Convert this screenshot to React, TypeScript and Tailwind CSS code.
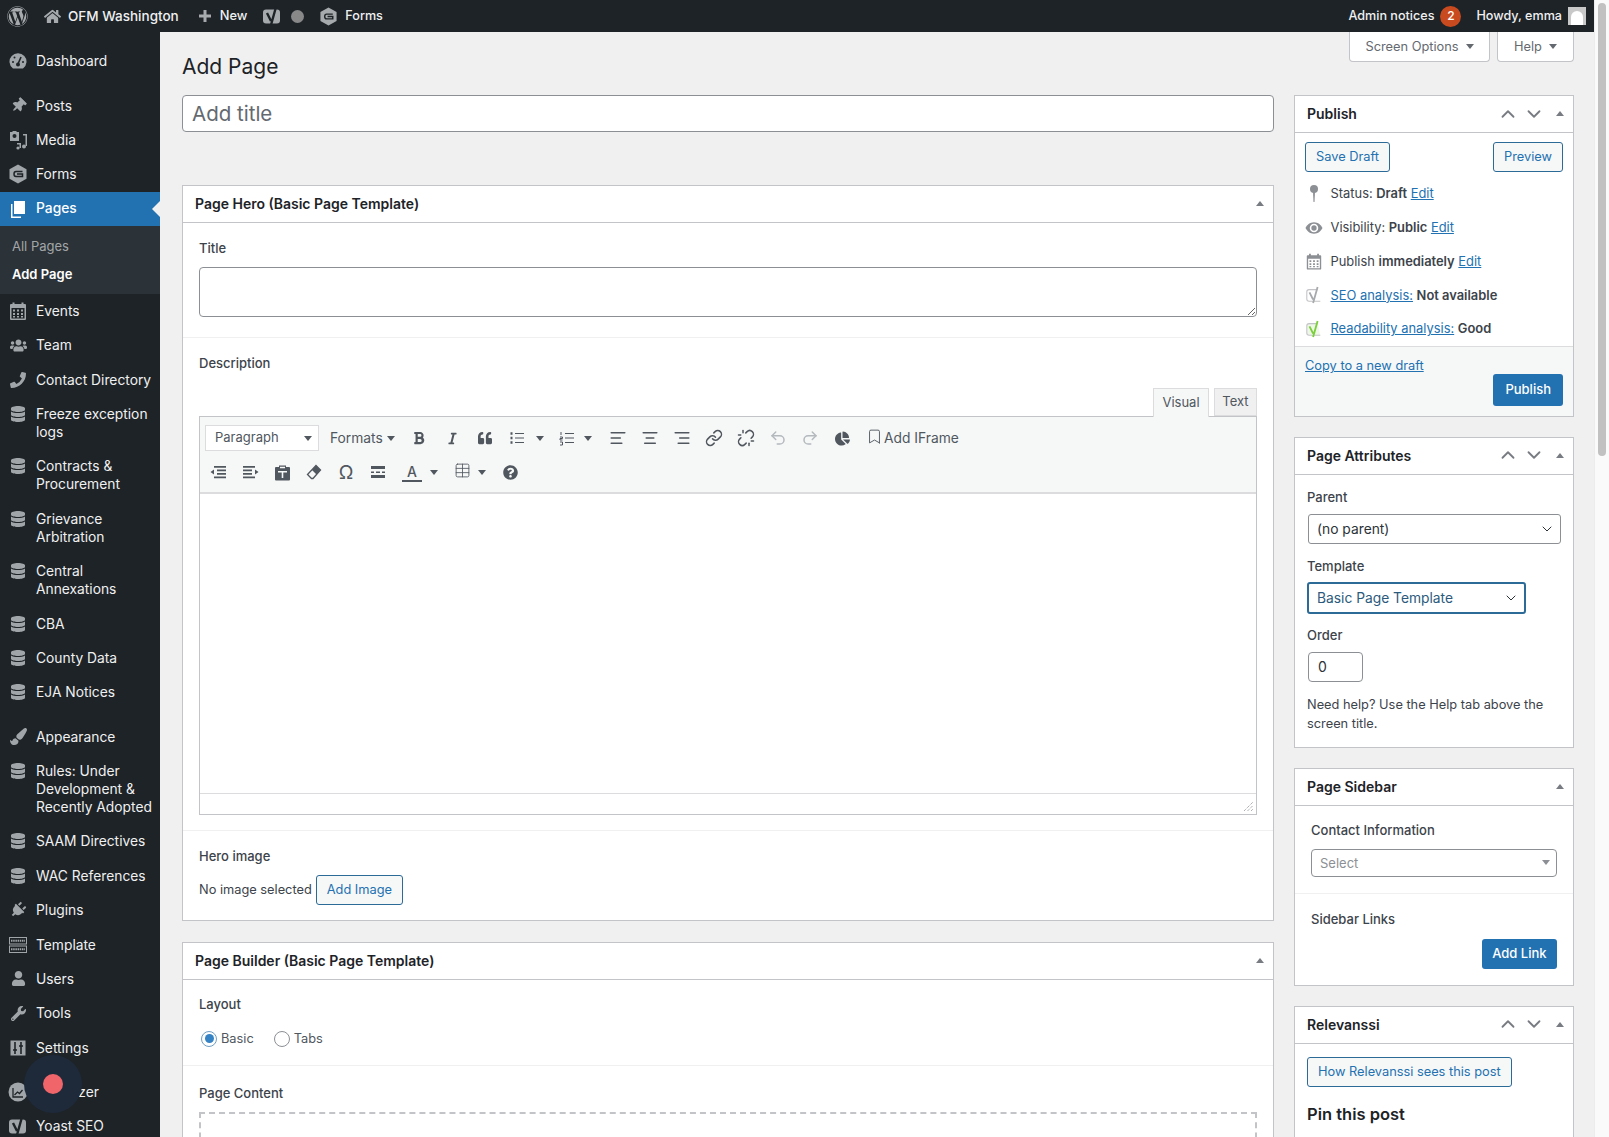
import type { ReactNode } from 'react';
import { ChevronDown, ChevronUp, AlignLeft, AlignCenter, AlignRight, Link, Unlink, Undo2, Redo2, Bookmark, Table } from 'lucide-react';
import { FaWordpress, FaHome, FaDatabase, FaPhoneAlt, FaPaintBrush, FaPlug, FaUser, FaWrench, FaUsers, FaThumbtack, FaBold, FaItalic, FaQuoteLeft, FaChartPie, FaQuestionCircle } from 'react-icons/fa';

function FormsIcon({ size = 20 }: { size?: number }) {
  return (
    <svg width={size} height={size} viewBox="0 0 20 20" fill="currentColor">
      <path d="M10 .500l8.500 4.700v9.600L10 19.500l-8.500-4.700V5.200z" />
      <path d="M14.500 7.500H8Q6 7.500 6 10t2 2.500h6.500V10H9" fill="none" stroke="#1d2327" strokeWidth="1.500" />
    </svg>
  );
}

function YoastIcon({ size = 20, bg = 'currentColor', fg = '#1d2327' }: { size?: number; bg?: string; fg?: string }) {
  return (
    <svg width={size} height={size} viewBox="0 0 20 20">
      <rect x="1" y="3.500" width="17" height="14" rx="3" fill={bg} />
      <path d="M5 7l4 8M14 1l-5 18" fill="none" stroke={fg} strokeWidth="2.400" />
    </svg>
  );
}

function YoastOutline({ color, fill = 'none' }: { color: string; fill?: string }) {
  return (
    <svg width="20" height="20" viewBox="0 0 20 20">
      <path d="M14 4H4.500A2.500 2.500 0 0 0 2 6.500v8A2.500 2.500 0 0 0 4.500 17H17" fill={fill} stroke="#c3c4c7" strokeWidth="1.200" />
      <path d="M5 7l4 8M14 1l-5 18" fill="none" stroke={color} strokeWidth="2" />
    </svg>
  );
}

function MediaIcon() {
  return (
    <svg width="20" height="20" viewBox="0 0 20 20" fill="currentColor">
      <path d="M2 2h2l1-1h3l1 1h2v9H2z" />
      <circle cx="6.500" cy="6" r="2" fill="#1d2327" />
      <path d="M15 4h4v12h-1.500V5.500H15z" />
      <circle cx="16" cy="16.500" r="2" />
      <path d="M9 13h4v5h-1.500v-3.500H9z" />
      <circle cx="10" cy="18" r="1.600" />
    </svg>
  );
}

function DashIcon() {
  return (
    <svg width="20" height="20" viewBox="0 0 20 20">
      <path d="M5 17.500a8.500 8.500 0 1 1 10 0z" fill="currentColor" />
      <path d="M10 13l3-7" stroke="#1d2327" strokeWidth="1.600" />
      <circle cx="10" cy="13.500" r="2" fill="#1d2327" />
      <circle cx="5" cy="11" r="1" fill="#1d2327" />
      <circle cx="6.500" cy="6.500" r="1" fill="#1d2327" />
      <circle cx="15" cy="11" r="1" fill="#1d2327" />
    </svg>
  );
}

function PagesIcon() {
  return (
    <svg width="20" height="20" viewBox="0 0 20 20" fill="#fff">
      <path d="M6 2h11v13H6z" />
      <path d="M3 5h1.500v12.500H13V19H3z" />
    </svg>
  );
}

function CalendarIcon({ size = 20 }: { size?: number }) {
  return (
    <svg width={size} height={size} viewBox="0 0 20 20" fill="currentColor">
      <path d="M3 3h1.500V1.500h2V3h7V1.500h2V3H17a1 1 0 0 1 1 1v14a1 1 0 0 1-1 1H3a1 1 0 0 1-1-1V4a1 1 0 0 1 1-1zm.500 4v10.500h13V7z" />
      <path d="M5 8.500h2v2H5zM9 8.500h2v2H9zM13 8.500h2v2h-2zM5 12h2v2H5zM9 12h2v2H9zM13 12h2v2h-2zM5 15h2v1.500H5zM9 15h2v1.500H9zM13 15h2v1.500h-2z" />
    </svg>
  );
}

function TemplateIcon() {
  return (
    <svg width="20" height="20" viewBox="0 0 20 20" fill="none" stroke="currentColor">
      <rect x="1.500" y="2.500" width="17" height="6.500" strokeWidth="1" />
      <rect x="1.500" y="11" width="17" height="6.500" strokeWidth="1" />
      <path d="M3 5.700h14M3 14.200h14" strokeWidth="2" strokeDasharray="1.500 .7" />
    </svg>
  );
}

function SettingsIcon() {
  return (
    <svg width="20" height="20" viewBox="0 0 20 20">
      <rect x="2.500" y="2.500" width="15" height="15" fill="currentColor" />
      <path d="M7 4v12M13 4v12M5 12h4M11 8h4" stroke="#1d2327" strokeWidth="1.600" />
    </svg>
  );
}

function AnalyzerIcon() {
  return (
    <svg width="20" height="20" viewBox="0 0 20 20">
      <circle cx="10" cy="10" r="9.500" fill="currentColor" />
      <path d="M5 6v9h10M6.500 13l3-3 2 1.500 3-3.500" fill="none" stroke="#1d2327" strokeWidth="1.300" />
    </svg>
  );
}

function IndentIcon({ out = false }: { out?: boolean }) {
  return (
    <svg width="17" height="17" viewBox="0 0 17 17" fill="#50575e" className={out ? '' : '-scale-x-100'}>
      <path d="M4 2h12v1.700H4zM7 5.500h9v1.700H7zM7 9h9v1.700H7zM4 12.500h12v1.700H4zM4 5.500v5l-3.500-2.500z" />
    </svg>
  );
}

const dbIcon = <FaDatabase size={16} />;

type MenuEntry = { icon: ReactNode; label: string; gap?: boolean };

const menuTop: MenuEntry[] = [
  { icon: <FaThumbtack size={15} className="rotate-45" />, label: 'Posts', gap: true },
  { icon: <MediaIcon />, label: 'Media' },
  { icon: <FormsIcon />, label: 'Forms' },
];

const menuRest: MenuEntry[] = [
  { icon: <CalendarIcon />, label: 'Events' },
  { icon: <FaUsers size={17} />, label: 'Team' },
  { icon: <FaPhoneAlt size={16} className="-scale-x-100" />, label: 'Contact Directory' },
  { icon: dbIcon, label: 'Freeze exception logs' },
  { icon: dbIcon, label: 'Contracts & Procurement' },
  { icon: dbIcon, label: 'Grievance Arbitration' },
  { icon: dbIcon, label: 'Central Annexations' },
  { icon: dbIcon, label: 'CBA' },
  { icon: dbIcon, label: 'County Data' },
  { icon: dbIcon, label: 'EJA Notices' },
  { icon: <FaPaintBrush size={17} />, label: 'Appearance', gap: true },
  { icon: dbIcon, label: 'Rules: Under Development & Recently Adopted' },
  { icon: dbIcon, label: 'SAAM Directives' },
  { icon: dbIcon, label: 'WAC References' },
  { icon: <FaPlug size={16} className="rotate-45" />, label: 'Plugins' },
  { icon: <TemplateIcon />, label: 'Template' },
  { icon: <FaUser size={15} />, label: 'Users' },
  { icon: <FaWrench size={15} />, label: 'Tools' },
  { icon: <SettingsIcon />, label: 'Settings' },
  { icon: <AnalyzerIcon />, label: 'Optimizer', gap: true },
  { icon: <YoastIcon />, label: 'Yoast SEO' },
];

function MenuItem({ icon, label, gap }: MenuEntry) {
  return (
    <div className={`flex text-[13.800px] leading-[18px] py-[8.200px] text-[#f0f0f1] ${gap ? 'mt-[10px]' : ''}`}>
      <div className="w-[36px] h-[18px] shrink-0 flex items-center justify-center text-[#a0a5aa]">{icon}</div>
      <div className="pr-1">{label}</div>
    </div>
  );
}

function Sidebar() {
  return (
    <div className="w-[160px] shrink-0 bg-[#1d2327] pt-[12px] overflow-hidden">
      <MenuItem icon={<DashIcon />} label="Dashboard" />
      {menuTop.map((m) => (
        <MenuItem key={m.label} {...m} />
      ))}
      <div className="relative flex items-center h-[34.300px] bg-[#2271b1] text-[13.800px] text-white font-medium">
        <div className="w-[36px] flex justify-center">
          <PagesIcon />
        </div>
        Pages
        <div className="absolute right-0 top-[9px] w-0 h-0 border-y-[8px] border-y-transparent border-r-[8px] border-r-[#f0f0f1]" />
      </div>
      <div className="bg-[#2c3338] pt-[6px] h-[68px] text-[13px] leading-[28px] pl-[12px]">
        <div className="text-[#c3c4c7]/80">All Pages</div>
        <div className="text-white font-semibold">Add Page</div>
      </div>
      {menuRest.map((m) => (
        <MenuItem key={m.label} {...m} />
      ))}
    </div>
  );
}

function TopBar() {
  return (
    <div className="h-[32px] bg-[#1d2327] text-[#f0f0f1] text-[12.600px] font-medium flex items-center shrink-0">
      <div className="w-[34px] flex justify-center text-[#a7aaad]">
        <FaWordpress size={21} />
      </div>
      <div className="ml-[10px] text-[#a7aaad]">
        <FaHome size={17} />
      </div>
      <span className="ml-[7px] text-[13.500px]">OFM Washington</span>
      <svg className="ml-[18px] text-[#a7aaad]" width="16" height="16" viewBox="0 0 16 16" fill="currentColor">
        <path d="M6.500 2h3v4.500H14v3H9.500V14h-3V9.500H2v-3h4.500z" />
      </svg>
      <span className="ml-[7px] text-[12.800px]">New</span>
      <div className="ml-[15px] text-[#a7aaad]">
        <YoastIcon size={20} />
      </div>
      <div className="ml-[9px] w-[13px] h-[13px] rounded-full bg-[#888]" />
      <div className="ml-[15px] text-[#a7aaad]">
        <FormsIcon size={19} />
      </div>
      <span className="ml-[7px]">Forms</span>
      <div className="ml-auto flex items-center">
        <span>Admin notices</span>
        <span className="ml-[6px] w-[21px] h-[21px] rounded-full bg-[#ca4a1f] text-[12px] text-white flex items-center justify-center">2</span>
        <span className="ml-[15px]">Howdy, emma</span>
        <div className="ml-[6px] mr-[8px] w-[18px] h-[18px] bg-[#c8c8c8] flex items-end justify-center overflow-hidden">
          <div className="w-[12px] h-[14px] bg-white rounded-t-full" />
        </div>
      </div>
    </div>
  );
}

function Caret({ up = false }: { up?: boolean }) {
  return (
    <svg width="8" height="5" viewBox="0 0 8 5" fill="currentColor" className="shrink-0">
      <path d={up ? 'M4 0l4 5H0z' : 'M0 0h8L4 5z'} />
    </svg>
  );
}

function OutlineBtn({ children, className = '' }: { children: ReactNode; className?: string }) {
  return (
    <div className={`h-[30px] px-[10px] flex items-center border border-[#2c6a97] rounded-[3px] bg-[#f6f7f7] text-[#2271b1] text-[12.800px] ${className}`}>
      {children}
    </div>
  );
}

function BlueBtn({ children, h = 'h-[32px]', px = 'px-[12px]' }: { children: ReactNode; h?: string; px?: string }) {
  return <div className={`${h} ${px} flex items-center rounded-[3px] bg-[#2271b1] text-white text-[13px] font-medium`}>{children}</div>;
}

function BoxHead({ title, arrows = false }: { title: string; arrows?: boolean }) {
  return (
    <div className="h-[35px] box-content border-b border-[#c3c4c7] flex items-center pl-[12px] pb-px text-[14px] font-semibold text-[#1d2327]">
      {title}
      <div className="ml-auto flex items-center text-[#787c82]">
        {arrows && (
          <>
            <ChevronUp size={22} strokeWidth={2} className="mr-[4px]" />
            <ChevronDown size={22} strokeWidth={2} className="mr-[2px]" />
          </>
        )}
        <div className="w-[26px] flex justify-center">
          <Caret up />
        </div>
      </div>
    </div>
  );
}

function Box({ title, arrows, children, className = '' }: { title: string; arrows?: boolean; children: ReactNode; className?: string }) {
  return (
    <div className={`bg-white border border-[#c3c4c7] ${className}`}>
      <BoxHead title={title} arrows={arrows} />
      {children}
    </div>
  );
}

function Tool({ children, w = 'w-[32px]' }: { children: ReactNode; w?: string }) {
  return <div className={`${w} h-[30px] shrink-0 flex items-center text-[#50575e] ${w === 'w-[32px]' ? 'justify-center' : 'pl-[8px]'}`}>{children}</div>;
}

function ListIcon({ numbered = false }: { numbered?: boolean }) {
  return (
    <svg width="16" height="16" viewBox="0 0 16 16" fill="none" stroke="#50575e">
      <path d="M6 3.500h9M6 8h9M6 12.500h9" strokeWidth="1" />
      {numbered ? (
        <path d="M2 2v3M1 7h2.500v1.500H1V10h2.500M1 12h2.500v3H1" strokeWidth="1" />
      ) : (
        <path d="M1.500 3.500h2M1.500 8h2M1.500 12.500h2" strokeWidth="2.400" />
      )}
    </svg>
  );
}

function EditorToolbar() {
  return (
    <div className="bg-[#f6f7f7] border-b-2 border-[#dcdcde] h-[77px] pt-[6px]">
      <div className="flex items-center h-[30px] pl-[5px]">
        <div className="w-[114px] h-[26px] bg-white border border-[#dcdcde] flex items-center justify-between pl-[9px] pr-[6px] text-[13px] text-[#50575e]">
          Paragraph <Caret />
        </div>
        <div className="w-[86px] pl-[11px] text-[13.800px] text-[#50575e] flex items-center gap-[4px]">
          Formats <Caret />
        </div>
        <div className="-ml-[2px] flex items-center">
          <Tool><FaBold size={14} /></Tool>
        </div>
        <div className="ml-[1px] flex items-center">
          <Tool><FaItalic size={13} /></Tool>
        </div>
        <div className="ml-[1px] flex items-center">
          <Tool><FaQuoteLeft size={14} /></Tool>
        </div>
        <Tool w="w-[52px]"><ListIcon /><span className="ml-[11px]"><Caret /></span></Tool>
        <div className="-ml-[2px] flex items-center">
          <Tool w="w-[51px]"><ListIcon numbered /><span className="ml-[9px]"><Caret /></span></Tool>
        </div>
        <Tool><AlignLeft size={18} strokeWidth={2.200} /></Tool>
        <Tool><AlignCenter size={18} strokeWidth={2.200} /></Tool>
        <Tool><AlignRight size={18} strokeWidth={2.200} /></Tool>
        <Tool><Link size={18} strokeWidth={2} /></Tool>
        <Tool><Unlink size={18} strokeWidth={2} /></Tool>
        <Tool><Undo2 size={18} className="text-[#b4b9be]" /></Tool>
        <Tool><Redo2 size={18} className="text-[#b4b9be]" /></Tool>
        <Tool><FaChartPie size={15} /></Tool>
        <div className="ml-[8px] flex items-center text-[13.800px] text-[#50575e]">
          <Bookmark size={17} strokeWidth={1.300} className="-translate-y-[2px]" />
          <span className="ml-[1px]">Add IFrame</span>
        </div>
      </div>
      <div className="flex items-center h-[30px] mt-[4px] pl-[2px]">
        <Tool><IndentIcon out /></Tool>
        <Tool><IndentIcon /></Tool>
        <Tool>
          <svg width="17" height="17" viewBox="0 0 17 17" fill="#50575e">
            <path d="M2 3h3V1.500h7V3h3a1 1 0 0 1 1 1v11.500a1 1 0 0 1-1 1H2a1 1 0 0 1-1-1V4a1 1 0 0 1 1-1z" />
            <path d="M4 7h9v1.500H9.300V14H7.700V8.500H4zM6 2.800h5v1.500H6z" fill="#f6f7f7" />
          </svg>
        </Tool>
        <Tool>
          <svg width="16" height="16" viewBox="0 0 16 16">
            <path d="M10 1.500l4.500 4.500-7.500 8.500H5.500L1.500 10.500z" fill="none" stroke="#50575e" strokeWidth="1.300" />
            <path d="M10 1.500l4.500 4.500-4 4.500L6 6z" fill="#50575e" />
          </svg>
        </Tool>
        <Tool><span className="text-[19px] leading-none">Ω</span></Tool>
        <Tool>
          <svg width="16" height="14" viewBox="0 0 16 14" fill="#50575e">
            <path d="M1 1h14v3H1zM1 10h14v3H1zM1 6.500h3V8H1zM6 6.500h4V8H6zM12 6.500h3V8h-3z" />
          </svg>
        </Tool>
        <Tool w="w-[54px]">
          <span className="w-[20px] text-center text-[14px] leading-[17px] border-b-[2px] border-[#50575e] font-medium">A</span>
          <span className="ml-[8px]"><Caret /></span>
        </Tool>
        <div className="-ml-[2px] flex items-center">
          <Tool w="w-[48px]">
            <Table size={17} strokeWidth={1.200} className="-translate-y-[2px]" />
            <span className="ml-[7px]"><Caret /></span>
          </Tool>
        </div>
        <Tool><FaQuestionCircle size={15} /></Tool>
      </div>
    </div>
  );
}

function Label({ children, className = '' }: { children: ReactNode; className?: string }) {
  return <div className={`text-[13px] leading-[18px] font-medium text-[#3c434a] ${className}`}>{children}</div>;
}

function MainColumn() {
  return (
    <div className="flex-1 min-w-0">
      <input placeholder="Add title" className="block w-full h-[37px] border border-[#8c8f94] rounded-[4px] bg-white px-[9px] text-[20.500px] placeholder:text-[#646970] outline-none" />
      <Box title="Page Hero (Basic Page Template)" className="mt-[53px]">
        <div className="px-[16px] pt-[16px] pb-[20px] border-b border-[#f0f0f1]">
          <Label>Title</Label>
          <textarea className="block mt-[10px] w-full h-[50px] border border-[#8c8f94] rounded-[4px] bg-white outline-none" />
        </div>
        <div className="px-[16px] pt-[16px] pb-[15px] border-b border-[#f0f0f1]">
          <Label>Description</Label>
          <div className="flex justify-end gap-[5px] mt-[16px] h-[29px] text-[13px] text-[#50575e] relative z-10">
            <div className="w-[56px] h-[29px] bg-[#f6f7f7] border border-[#dcdcde] border-b-0 flex items-center justify-center">Visual</div>
            <div className="w-[43px] h-[28px] bg-[#f0f0f1] border border-[#dcdcde] flex items-center justify-center">Text</div>
          </div>
          <div className="border border-[#c3c4c7] -mt-px">
            <EditorToolbar />
            <div className="h-[300px] bg-white border-b border-[#dcdcde]" />
            <div className="h-[20px] flex justify-end items-end pr-[2px] pb-[2px]">
              <svg width="11" height="11" viewBox="0 0 11 11" stroke="#8c8f94">
                <path d="M1 10l9-9M4.500 10L10 4.500M8 10l2-2" strokeDasharray="1 1" />
              </svg>
            </div>
          </div>
        </div>
        <div className="px-[16px] pt-[16px] pb-[15px]">
          <Label>Hero image</Label>
          <div className="flex items-center mt-[10px] text-[12.800px] text-[#3c434a]">
            No image selected
            <OutlineBtn className="ml-[4px]">Add Image</OutlineBtn>
          </div>
        </div>
      </Box>
      <Box title="Page Builder (Basic Page Template)" className="mt-[21px] h-[400px]">
        <div className="px-[16px] pt-[15px] pb-[17px] border-b border-[#f0f0f1]">
          <Label>Layout</Label>
          <div className="flex items-center mt-[16px] text-[12.800px] text-[#50575e]">
            <div className="ml-[2px] w-[16px] h-[16px] rounded-full border border-[#6f9ec4] flex items-center justify-center">
              <div className="w-[9px] h-[9px] rounded-full bg-[#3582c4]" />
            </div>
            <span className="ml-[4px]">Basic</span>
            <div className="ml-[20px] w-[16px] h-[16px] rounded-full border border-[#8c8f94]" />
            <span className="ml-[4px]">Tabs</span>
          </div>
        </div>
        <div className="px-[16px] pt-[18px]">
          <Label>Page Content</Label>
          <div className="mt-[10px] h-[200px] border-2 border-dashed border-[#c3c4c7]" />
        </div>
      </Box>
    </div>
  );
}

function MiscRow({ icon, children }: { icon: ReactNode; children: ReactNode }) {
  return (
    <div className="flex items-center h-[33.800px] text-[12.900px] text-[#3c434a]">
      <div className="w-[18px] flex justify-center text-[#8c8f94] shrink-0">{icon}</div>
      <div className="ml-[7.500px]">{children}</div>
    </div>
  );
}

function A({ children }: { children: ReactNode }) {
  return <span className="text-[#2271b1] underline">{children}</span>;
}

function SelectBox({ text, className = '' }: { text: string; className?: string }) {
  return (
    <div className={`flex items-center justify-between rounded-[3px] bg-white text-[13.800px] pl-[8px] pr-[5px] ${className}`}>
      {text}
      <ChevronDown size={16} strokeWidth={1.500} className="text-[#2c3338]" />
    </div>
  );
}

function SideColumn() {
  return (
    <div className="w-[280px] shrink-0">
      <Box title="Publish" arrows>
        <div className="px-[10px] pt-[9px]">
          <div className="flex justify-between">
            <OutlineBtn>Save Draft</OutlineBtn>
            <OutlineBtn>Preview</OutlineBtn>
          </div>
          <div className="mt-[5px]">
            <MiscRow
              icon={
                <svg width="12" height="20" viewBox="0 0 12 20" fill="currentColor">
                  <circle cx="6" cy="5" r="4" />
                  <path d="M5 8h2l-.5 10h-1z" />
                </svg>
              }
            >
              Status: <b className="font-semibold">Draft</b> <A>Edit</A>
            </MiscRow>
            <MiscRow
              icon={
                <svg width="19" height="14" viewBox="0 0 19 14" fill="currentColor">
                  <path d="M9.500 1C5 1 2 4 .500 7c1.500 3 4.500 6 9 6s7.500-3 9-6c-1.500-3-4.500-6-9-6zm0 10.500a4.500 4.500 0 1 1 0-9 4.500 4.500 0 0 1 0 9z" />
                  <circle cx="9.500" cy="7" r="2.800" />
                </svg>
              }
            >
              Visibility: <b className="font-semibold">Public</b> <A>Edit</A>
            </MiscRow>
            <MiscRow icon={<CalendarIcon size={19} />}>
              Publish <b className="font-semibold">immediately</b> <A>Edit</A>
            </MiscRow>
            <MiscRow icon={<YoastOutline color="#a7aaad" />}>
              <A>SEO analysis:</A> <b className="font-semibold">Not available</b>
            </MiscRow>
            <MiscRow icon={<YoastOutline color="#7ad03a" fill="#eef7e8" />}>
              <A>Readability analysis:</A> <b className="font-semibold">Good</b>
            </MiscRow>
          </div>
        </div>
        <div className="border-t border-[#dcdcde] bg-[#f6f7f7] h-[70px] px-[10px] pt-[10px]">
          <div className="text-[12.800px] leading-[18px]">
            <A>Copy to a new draft</A>
          </div>
          <div className="flex justify-end -mt-px">
            <BlueBtn>Publish</BlueBtn>
          </div>
        </div>
      </Box>
      <Box title="Page Attributes" arrows className="mt-[20px]">
        <div className="px-[12px] pt-[13px] pb-[13px]">
          <Label>Parent</Label>
          <SelectBox text="(no parent)" className="mt-[8px] ml-px h-[30px] border border-[#8c8f94] text-[#2c3338]" />
          <Label className="mt-[13px]">Template</Label>
          <SelectBox text="Basic Page Template" className="mt-[7px] w-[219px] h-[32px] border-2 border-[#2c6a97] text-[#2c5a7d]" />
          <Label className="mt-[12px]">Order</Label>
          <div className="mt-[8px] ml-px w-[55px] h-[30px] border border-[#8c8f94] rounded-[4px] flex items-center pl-[9px] text-[14px] text-[#2c3338]">0</div>
          <div className="mt-[13px] text-[12.800px] leading-[19.500px] text-[#3c434a]">Need help? Use the Help tab above the screen title.</div>
        </div>
      </Box>
      <Box title="Page Sidebar" className="mt-[20px]">
        <div className="border-b border-[#f0f0f1] px-[16px] pt-[15px] pb-[16px]">
          <Label>Contact Information</Label>
          <div className="mt-[10px] h-[28px] border border-[#8c8f94] rounded-[4px] flex items-center justify-between pl-[8px] pr-[6px] text-[13px] text-[#8c8f94]">
            <span className="pt-[2px]">Select</span> <Caret />
          </div>
        </div>
        <div className="px-[16px] pt-[16px] pb-[16px]">
          <Label>Sidebar Links</Label>
          <div className="flex justify-end mt-[11px]">
            <BlueBtn h="h-[30px]" px="px-[10.500px]">Add Link</BlueBtn>
          </div>
        </div>
      </Box>
      <Box title="Relevanssi" arrows className="mt-[20px]">
        <div className="px-[12px] pt-[13px] pb-[40px]">
          <OutlineBtn className="w-fit">How Relevanssi sees this post</OutlineBtn>
          <div className="mt-[15px] text-[16.500px] font-semibold text-[#1d2327]">Pin this post</div>
        </div>
      </Box>
    </div>
  );
}

export default function App() {
  return (
    <div className="h-[1137px] w-[1609px] overflow-hidden flex bg-[#f0f0f1] font-['Inter','Liberation_Sans',sans-serif] relative">
      <div className="w-[1594px] flex flex-col shrink-0">
        <TopBar />
        <div className="flex flex-1 min-h-0">
          <Sidebar />
          <div className="flex-1 min-w-0 pl-[22px] pr-[20px] overflow-hidden">
            <div className="flex justify-between h-[63px]">
              <h1 className="text-[21px] leading-[29px] text-[#1d2327] pt-[20px]">Add Page</h1>
              <div className="flex gap-[7px] text-[12.800px] text-[#646970]">
                <div className="w-[141px] h-[30px] bg-white border border-t-0 border-[#c3c4c7] rounded-b-[4px] flex items-center justify-center gap-[7px]">
                  Screen Options <Caret />
                </div>
                <div className="w-[77px] h-[30px] bg-white border border-t-0 border-[#c3c4c7] rounded-b-[4px] flex items-center justify-center gap-[7px]">
                  Help <Caret />
                </div>
              </div>
            </div>
            <div className="flex gap-[20px] items-start">
              <MainColumn />
              <SideColumn />
            </div>
          </div>
        </div>
      </div>
      <div className="flex-1 bg-[#fafafa] border-l border-[#ececec] px-[3px] pt-[3px]">
        <div className="h-[453px] bg-[#c1c1c1] rounded-full" />
      </div>
      <div className="absolute left-[24px] top-[1055px] w-[58px] h-[58px] rounded-full bg-[#1e2a3a] flex items-center justify-center">
        <div className="w-[20px] h-[20px] rounded-full bg-[#f0656a]" />
      </div>
    </div>
  );
}
